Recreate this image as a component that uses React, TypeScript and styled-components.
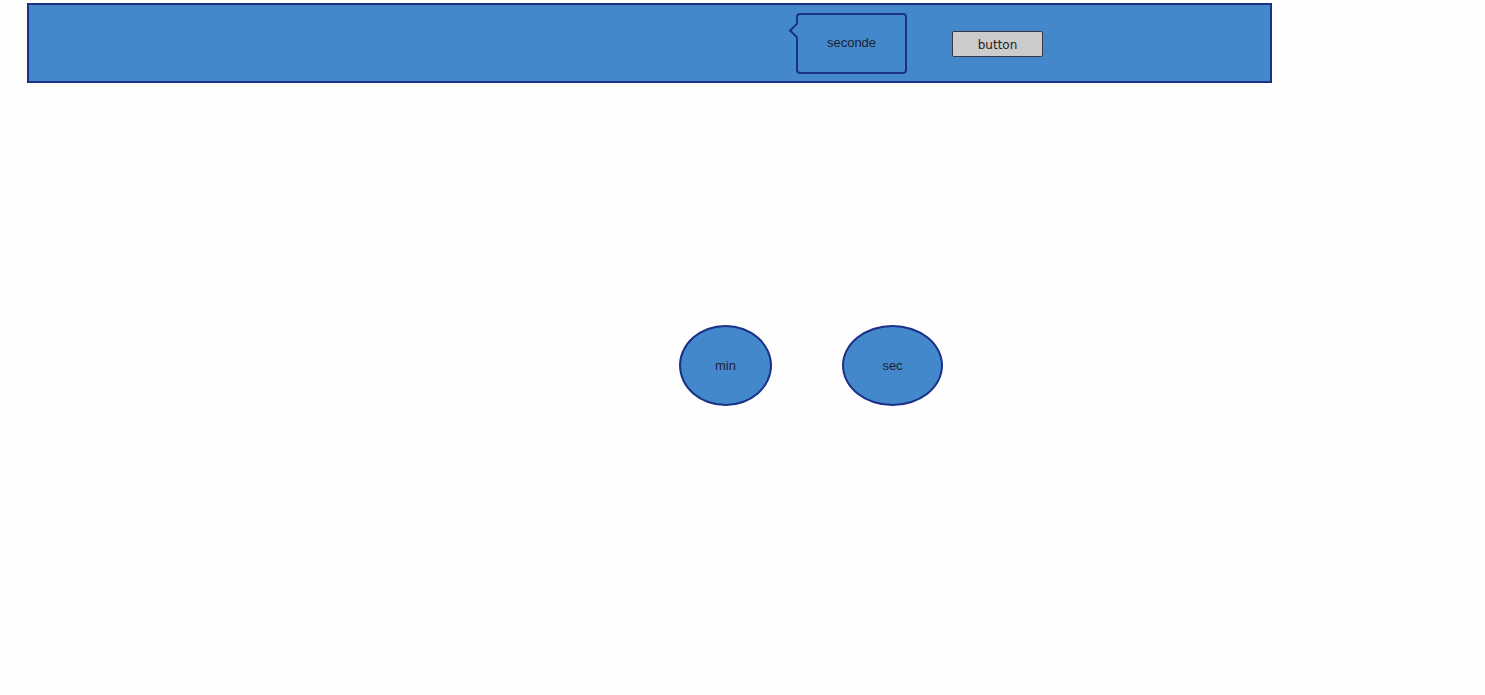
import React from "react";
import styled, { createGlobalStyle } from "styled-components";

const Global = createGlobalStyle`
  html, body { margin: 0; padding: 0; background: #fefefe; }
  body { font-family: "Liberation Sans", Arial, sans-serif; }
`;

const Page = styled.div`
  padding-top: 3px;
  padding-left: 27px;
  width: 1485px;
  height: 695px;
  box-sizing: border-box;
`;

const Header = styled.header`
  box-sizing: border-box;
  width: 1245px;
  height: 80px;
  background: #4488cc;
  border: 2px solid #1a3187;
  display: flex;
  align-items: center;
  padding-left: 767px;
  gap: 45px;
`;

const Callout = styled.div`
  position: relative;
  box-sizing: border-box;
  width: 111px;
  height: 61px;
  margin-top: 1px;
  border: 2px solid #1a3187;
  border-radius: 4px;
  display: flex;
  align-items: center;
  justify-content: center;
  font-size: 13px;
  color: #1c2330;
  padding-bottom: 2px;

  &::before {
    content: "";
    position: absolute;
    box-sizing: border-box;
    left: -7px;
    top: 10px;
    width: 11px;
    height: 11px;
    background: #4488cc;
    border-left: 2px solid #1a3187;
    border-bottom: 2px solid #1a3187;
    transform: rotate(45deg);
  }
`;

const SketchButton = styled.button`
  box-sizing: border-box;
  width: 91px;
  height: 26px;
  margin-top: 2px;
  background: #cccccc;
  border: 1px solid #3a3a3a;
  border-radius: 2px;
  font-family: "Comic Sans MS", "DejaVu Sans", sans-serif;
  font-size: 12px;
  color: #222;
  padding: 0;
  padding-top: 2px;
`;

const CircleRow = styled.div`
  display: flex;
  margin-top: 242px;
  padding-left: 652px;
  gap: 70px;
`;

const Oval = styled.div<{ $w: number }>`
  box-sizing: border-box;
  width: ${(p) => p.$w}px;
  height: 81px;
  border-radius: 50%;
  background: #4488cc;
  border: 2px solid #1a3187;
  display: flex;
  align-items: center;
  justify-content: center;
  font-size: 13px;
  color: #1c2330;
`;

export default function App() {
  return (
    <>
      <Global />
      <Page>
        <Header>
          <Callout>seconde</Callout>
          <SketchButton>button</SketchButton>
        </Header>
        <CircleRow>
          <Oval $w={93}>min</Oval>
          <Oval $w={101}>sec</Oval>
        </CircleRow>
      </Page>
    </>
  );
}
